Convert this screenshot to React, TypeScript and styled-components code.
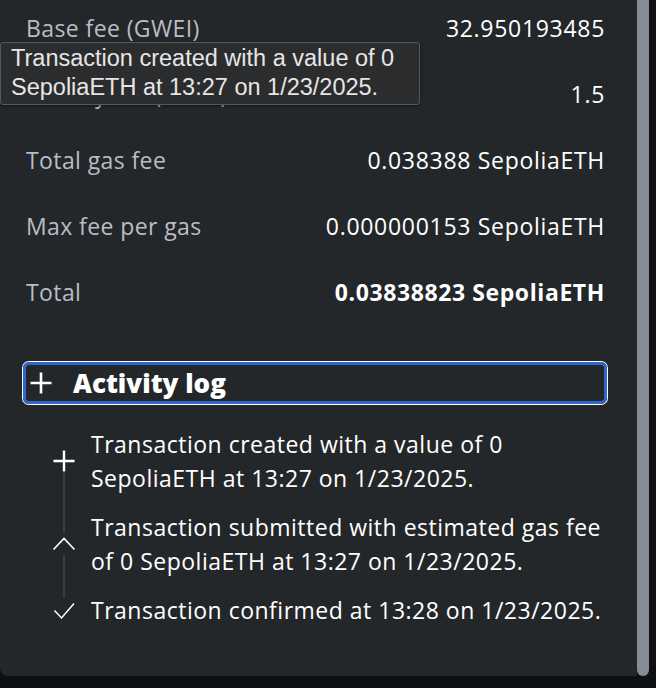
import React from 'react';
import styled, { createGlobalStyle } from 'styled-components';

const GlobalStyle = createGlobalStyle`
  html, body {
    margin: 0;
    padding: 0;
    background: #0f1012;
  }
  body {
    font-family: "Open Sans", Lato, sans-serif;
  }
`;

const Frame = styled.div`
  display: flex;
  width: 649px;
  height: 676px;
`;

const Panel = styled.div`
  position: relative;
  flex: 1;
  background: #24272a;
  border-bottom-left-radius: 8px;
  overflow: hidden;
`;

const ScrollThumb = styled.div`
  width: 12px;
  background: #868c94;
  border-bottom-left-radius: 6px;
  border-bottom-right-radius: 6px;
`;

const FeeList = styled.div`
  display: flex;
  flex-direction: column;
  margin-top: -5px;
  padding: 0 32px 0 26px;
`;

const FeeRow = styled.div`
  display: flex;
  justify-content: space-between;
  align-items: center;
  height: 66px;
  font-size: 23px;
  letter-spacing: 0.4px;
`;

const Label = styled.span`
  color: #b9bdc5;
`;

const Value = styled.span<{ $bold?: boolean }>`
  color: #ffffff;
  font-weight: ${(p) => (p.$bold ? 700 : 400)};
  letter-spacing: ${(p) => (p.$bold ? '0.6px' : '0.7px')};
`;

const Tooltip = styled.div`
  position: absolute;
  left: 0;
  top: 42px;
  width: 402px;
  padding: 1px 6px 2px 10px;
  background: #2b2c2e;
  border: 1px solid #55575a;
  border-radius: 3px;
  color: #e6e6e6;
  font-family: "Liberation Sans", Arial, sans-serif;
  font-size: 23.5px;
  line-height: 29px;
  box-shadow: 0 1px 3px rgba(0, 0, 0, 0.5);
`;

const LogToggle = styled.button`
  display: flex;
  align-items: center;
  gap: 20px;
  margin: 37px 0 0 23px;
  width: 584px;
  height: 42px;
  padding: 0 0 0 3px;
  background: transparent;
  border: 3px solid #2f66d0;
  border-radius: 6px;
  box-shadow: 0 0 0 1px #ffffff;
  color: #ffffff;
  font-family: "Open Sans", sans-serif;
  font-size: 26px;
  font-weight: 800;
  cursor: pointer;
`;

const Timeline = styled.ul`
  position: relative;
  list-style: none;
  margin: 23px 0 0 0;
  padding: 0 0 0 52px;
  display: flex;
  flex-direction: column;
  gap: 15px;
`;

const Rail = styled.div`
  position: absolute;
  left: 63px;
  top: 40px;
  height: 140px;
  width: 2px;
  background: #3b3e43;
`;

const Entry = styled.li`
  position: relative;
  display: flex;
  align-items: center;
  gap: 15px;
`;

const IconSlot = styled.div`
  display: flex;
  align-items: center;
  justify-content: center;
  width: 24px;
  height: 24px;
  flex-shrink: 0;
  background: #24272a;
`;

const EntryText = styled.div`
  color: #ffffff;
  font-size: 23px;
  letter-spacing: 0.5px;
  line-height: 34px;
  width: 520px;
`;

const PlusIcon = ({ size = 24, stroke = 2.6 }: { size?: number; stroke?: number }) => (
  <svg width={size} height={size} viewBox="0 0 24 24" fill="none" stroke="#fff" strokeWidth={stroke} strokeLinecap="butt">
    <path d="M12 1.5v21M1.5 12h21" />
  </svg>
);

const CaretUpIcon = () => (
  <svg width="24" height="24" viewBox="0 0 24 24" fill="none" stroke="#fff" strokeWidth={1.6}>
    <path d="M1.5 17.5L12 6.5l10.5 11" />
  </svg>
);

const CheckIcon = () => (
  <svg width="24" height="24" viewBox="0 0 24 24" fill="none" stroke="#fff" strokeWidth={1.5}>
    <path d="M2.5 12.5l7 7.5L22 5.5" />
  </svg>
);

const fees = [
  { label: 'Base fee (GWEI)', value: '32.950193485' },
  { label: 'Priority fee (GWEI)', value: '1.5' },
  { label: 'Total gas fee', value: '0.038388 SepoliaETH' },
  { label: 'Max fee per gas', value: '0.000000153 SepoliaETH' },
  { label: 'Total', value: '0.03838823 SepoliaETH', bold: true },
];

const App = () => {
  return (
    <>
      <GlobalStyle />
      <Frame>
        <Panel>
          <FeeList>
            {fees.map((f) => (
              <FeeRow key={f.label}>
                <Label>{f.label}</Label>
                <Value $bold={f.bold}>{f.value}</Value>
              </FeeRow>
            ))}
          </FeeList>
          <LogToggle>
            <PlusIcon />
            Activity log
          </LogToggle>
          <Timeline>
            <Rail />
            <Entry>
              <IconSlot><PlusIcon size={24} stroke={2.4} /></IconSlot>
              <EntryText>Transaction created with a value of 0 SepoliaETH at 13:27 on 1/23/2025.</EntryText>
            </Entry>
            <Entry>
              <IconSlot><CaretUpIcon /></IconSlot>
              <EntryText>Transaction submitted with estimated gas fee of 0 SepoliaETH at 13:27 on 1/23/2025.</EntryText>
            </Entry>
            <Entry>
              <IconSlot><CheckIcon /></IconSlot>
              <EntryText>Transaction confirmed at 13:28 on 1/23/2025.</EntryText>
            </Entry>
          </Timeline>
          <Tooltip>
            Transaction created with a value of 0<br />
            SepoliaETH at 13:27 on 1/23/2025.
          </Tooltip>
        </Panel>
        <ScrollThumb />
      </Frame>
    </>
  );
};

export default App;
